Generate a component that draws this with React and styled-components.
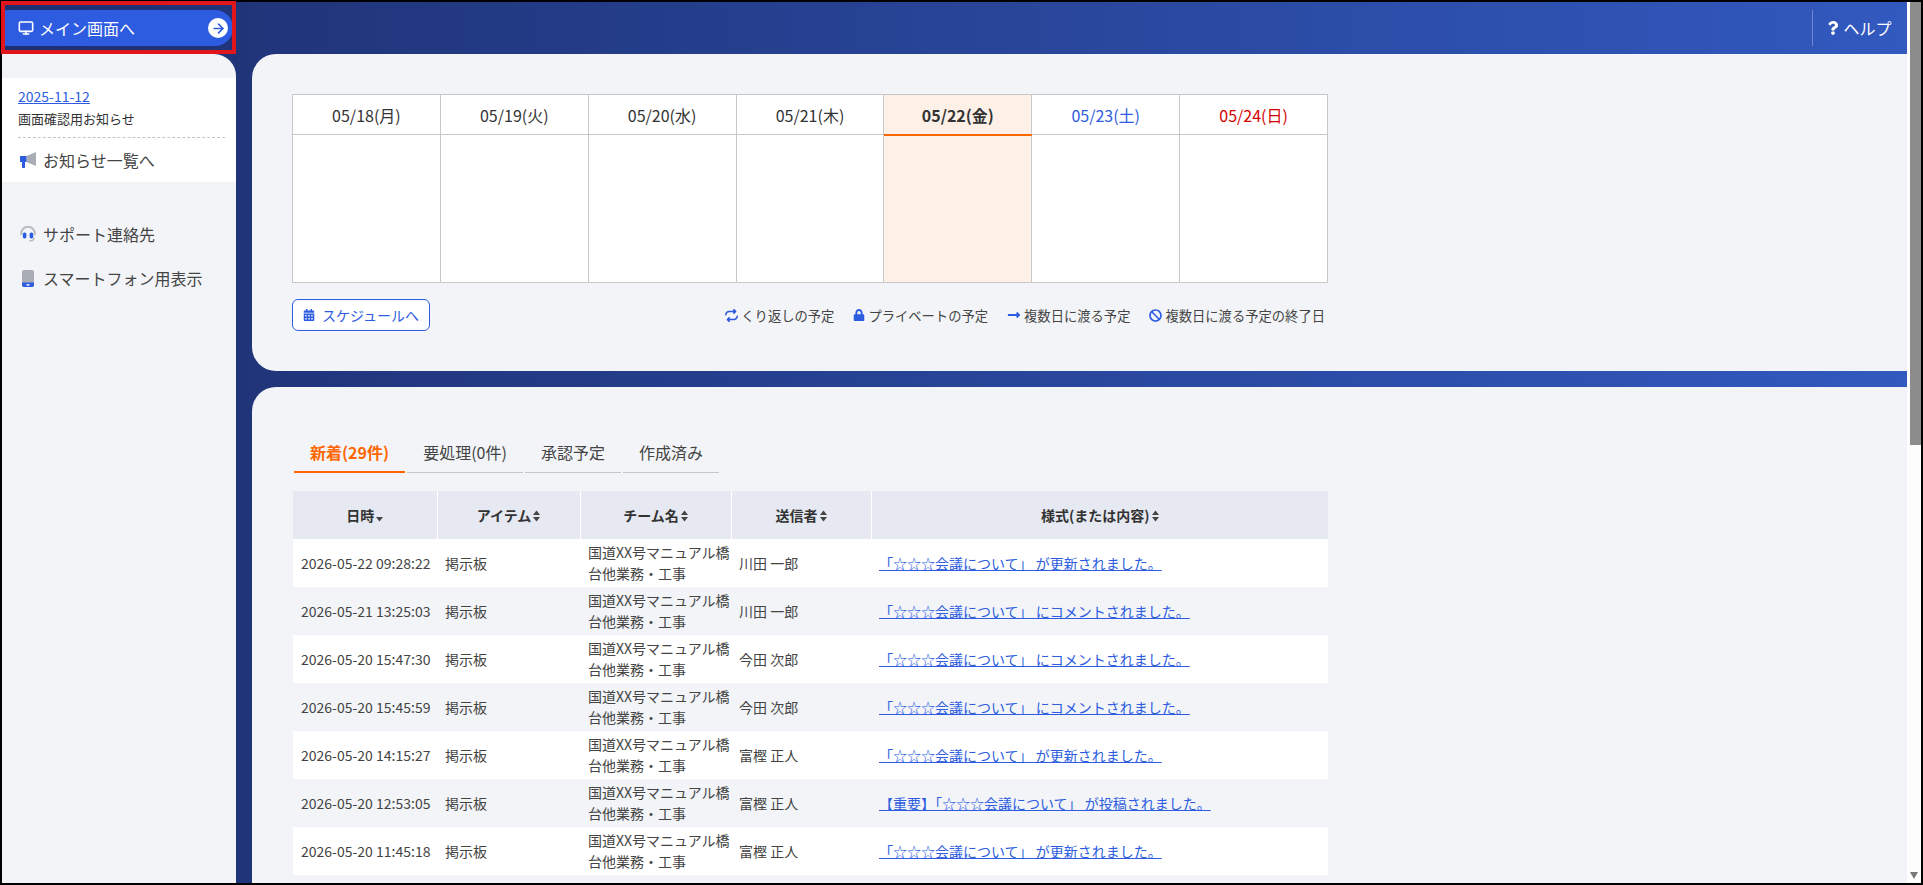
import styled, { createGlobalStyle } from "styled-components";
import { FaCalendarAlt, FaLock, FaLongArrowAltRight, FaBan, FaQuestion } from "react-icons/fa";
import { FaRepeat } from "react-icons/fa6";
import { LuMonitor, LuArrowRight } from "react-icons/lu";

const GlobalStyle = createGlobalStyle`
  html, body {
    margin: 0;
    height: 100%;
    overflow: hidden;
  }
  body {
    font-family: "Noto Sans CJK JP", "Noto Sans", sans-serif;
    color: #333;
    background: #000;
  }
  #root { height: 100%; }
`;

const Frame = styled.div`
  position: relative;
  height: 885px;
  box-sizing: border-box;
  border: 2px solid #000;
  background: #fff;
  display: flex;
`;

const Highlight = styled.div`
  position: absolute;
  left: -1px;
  top: -1px;
  width: 227px;
  height: 45px;
  border: 4px solid #e0161c;
  pointer-events: none;
`;

const Page = styled.div`
  flex: 1;
  min-width: 0;
  overflow: hidden;
  background: linear-gradient(90deg, #1d2f6f 0%, #3259bf 100%);
`;

const ScrollTrack = styled.div`
  width: 14px;
  flex: none;
  background: #fdfdfd;
  display: flex;
  flex-direction: column;
  justify-content: space-between;
`;

const ScrollThumb = styled.div`
  height: 443px;
  margin-left: 3px;
  background: #8c8c8c;
`;

const ScrollArrow = styled.div`
  width: 0;
  height: 0;
  margin: 0 0 4px 3px;
  border-style: solid;
  border-width: 7px 4.5px 0;
  border-color: #7a7a7a transparent transparent;
`;

const Header = styled.header`
  height: 52px;
  display: flex;
  align-items: center;
  justify-content: space-between;
`;

const MainButton = styled.a`
  width: 228px;
  height: 36px;
  margin-left: 3px;
  display: flex;
  align-items: center;
  box-sizing: border-box;
  padding: 0 5px 0 13px;
  gap: 5px;
  background: #2d5ce0;
  border-radius: 0 18px 18px 0;
  color: #fff;
  font-size: 16px;
`;

const ArrowCircle = styled.span`
  margin-left: auto;
  width: 20px;
  height: 20px;
  border-radius: 50%;
  background: #fff;
  color: #2d5ce0;
  display: flex;
  align-items: center;
  justify-content: center;
`;

const HelpLink = styled.a`
  height: 36px;
  width: 95px;
  box-sizing: border-box;
  border-left: 1px solid #6d86cf;
  padding-right: 2px;
  display: flex;
  align-items: center;
  justify-content: center;
  color: #fff;
  font-size: 16px;
  gap: 3px;
`;

const Body = styled.div`
  display: flex;
  align-items: stretch;
`;

const Sidebar = styled.aside`
  width: 234px;
  flex: none;
  box-sizing: border-box;
  background: #f2f4f8;
  border-radius: 0 22px 0 0;
  padding-top: 24px;
`;

const NewsBox = styled.div`
  height: 104px;
  box-sizing: border-box;
  background: #fff;
  padding: 7px 11px 0 16px;
`;

const DateLink = styled.a`
  display: block;
  font-size: 14px;
  line-height: 22px;
  color: #2d5ce0;
  text-decoration: underline;
`;

const NewsTitle = styled.div`
  font-size: 13px;
  line-height: 24px;
  height: 30px;
  border-bottom: 1px dashed #c4c4c4;
  color: #333;
`;

const SideLink = styled.a`
  display: flex;
  align-items: center;
  gap: 5px;
  height: 44px;
  font-size: 16px;
  color: #444;
`;

const SideNav = styled.nav`
  padding: 30px 16px 0;
`;

const IconBox = styled.span`
  width: 20px;
  display: flex;
  justify-content: center;
  flex: none;
`;

const Content = styled.main`
  flex: 1;
  min-width: 0;
  margin-left: 16px;
  display: flex;
  flex-direction: column;
  gap: 16px;
`;

const Card = styled.section`
  background: #f2f4f8;
  border-radius: 24px 0 0 24px;
  box-sizing: border-box;
  padding: ${(p) => p.$pad};
`;

const CalGrid = styled.div`
  width: 1036px;
  display: grid;
  grid-template-columns: repeat(7, 1fr);
  border-style: solid;
  border-width: 1px 0 0 1px;
  border-color: #c8c8c8;
  box-sizing: border-box;
`;

const CalHead = styled.div`
  position: relative;
  height: 40px;
  box-sizing: border-box;
  display: flex;
  align-items: center;
  justify-content: center;
  padding-top: 1px;
  font-size: 16px;
  font-weight: ${(p) => (p.$today ? 700 : 400)};
  color: ${(p) => p.$color || "#333"};
  background: ${(p) => (p.$today ? "#fdf0e6" : "#fff")};
  border-right: 1px solid #c8c8c8;
  border-bottom: 1px solid ${(p) => (p.$today ? "#ff6600" : "#c8c8c8")};
  box-shadow: ${(p) => (p.$today ? "0 1px 0 #ff6600" : "none")};
`;

const CalCell = styled.div`
  height: 148px;
  box-sizing: border-box;
  background: ${(p) => (p.$today ? "#fdf0e6" : "#fff")};
  border-right: 1px solid #c8c8c8;
  border-bottom: 1px solid #c8c8c8;
`;

const CalFooter = styled.div`
  width: 1036px;
  margin-top: 16px;
  display: flex;
  align-items: center;
  justify-content: space-between;
`;

const ScheduleButton = styled.a`
  width: 138px;
  height: 32px;
  box-sizing: border-box;
  display: flex;
  align-items: center;
  justify-content: center;
  gap: 7px;
  background: #fff;
  border: 1px solid #2d5ce0;
  border-radius: 6px;
  color: #2d5ce0;
  font-size: 14px;
`;

const Legend = styled.div`
  display: flex;
  gap: 19px;
  padding-right: 3px;
`;

const LegendItem = styled.span`
  display: flex;
  align-items: center;
  gap: 3px;
  font-size: 13.3px;
  color: #444;
  svg { color: #2d5ce0; }
`;

const Tabs = styled.div`
  display: flex;
  gap: 2px;
  margin-left: 2px;
  margin-bottom: 18px;
`;

const Tab = styled.div`
  width: ${(p) => p.$w}px;
  height: 34px;
  box-sizing: border-box;
  display: flex;
  align-items: center;
  justify-content: center;
  padding-bottom: 7px;
  font-size: 16px;
  font-weight: ${(p) => (p.$active ? 700 : 400)};
  color: ${(p) => (p.$active ? "#ff6600" : "#444")};
  border-bottom: ${(p) => (p.$active ? "2px solid #ff6600" : "1px solid #c8c8c8")};
`;

const Table = styled.table`
  width: 1035px;
  margin-left: 1px;
  table-layout: fixed;
  border-collapse: collapse;
  font-size: 14px;
`;

const Th = styled.th`
  height: 48px;
  padding: 0;
  background: #e6e9f2;
  border-left: 1px solid #fff;
  &:first-child { border-left: 0; }
  font-weight: 700;
  color: #333;
  font-size: 14px;
`;

const Tr = styled.tr`
  background: ${(p) => (p.$alt ? "#f2f4f8" : "#fff")};
`;

const Td = styled.td`
  height: 48px;
  padding: 0 0 0 8px;
  box-sizing: border-box;
  line-height: 21px;
  color: #444;
  white-space: ${(p) => (p.$wrap ? "normal" : "nowrap")};
`;

const MsgLink = styled.a`
  color: #2d5ce0;
  text-decoration: underline;
`;

const Sort = styled.svg`
  width: 7px;
  height: 12px;
  margin-left: 2px;
  vertical-align: -1px;
  fill: #444;
`;

const SortIcon = ({ desc }) => (
  <Sort viewBox="0 0 7 12">
    {!desc && <path d="M3.5 0.5 7 5H0z" />}
    <path d="M0 7h7L3.5 11.5z" />
  </Sort>
);

const SupportIcon = () => (
  <svg width="16" height="16" viewBox="0 0 16 16">
    <path d="M1.2 9V7.5a6.8 6.8 0 0 1 13.6 0V9" fill="none" stroke="#b9bcc4" strokeWidth="2" />
    <rect x="2.8" y="6.4" width="3.6" height="6" rx="1.6" fill="#2d5ce0" />
    <rect x="9.6" y="6.4" width="3.6" height="6" rx="1.6" fill="#2d5ce0" />
    <path d="M14 11.5c0 2.4-2 3.4-4.5 3.4" fill="none" stroke="#b9bcc4" strokeWidth="1.6" />
  </svg>
);

const PhoneIcon = () => (
  <svg width="12" height="17" viewBox="0 0 12 17">
    <rect x="0" y="0" width="12" height="17" rx="2" fill="#a9adb6" />
    <path d="M0 12.5h12V15a2 2 0 0 1-2 2H2a2 2 0 0 1-2-2z" fill="#2d5ce0" />
    <rect x="4.5" y="14.2" width="3" height="1.4" fill="#fff" />
  </svg>
);

const MegaphoneIcon = () => (
  <svg width="16" height="16" viewBox="0 0 16 16">
    <path d="M6.5 4 16 0v14L6.5 10z" fill="#a9adb6" />
    <path d="M0 4h6.5v6H5v6H2v-6H0z" fill="#2d5ce0" />
  </svg>
);

const days = [
  { label: "05/18(月)" },
  { label: "05/19(火)" },
  { label: "05/20(水)" },
  { label: "05/21(木)" },
  { label: "05/22(金)", today: true },
  { label: "05/23(土)", color: "#2d5ce0" },
  { label: "05/24(日)", color: "#d40000" },
];

const updated = "「☆☆☆会議について」 が更新されました。";
const commented = "「☆☆☆会議について」 にコメントされました。";
const posted = "【重要】「☆☆☆会議について」 が投稿されました。";

const rows = [
  ["2026-05-22 09:28:22", "川田 一郎", updated],
  ["2026-05-21 13:25:03", "川田 一郎", commented],
  ["2026-05-20 15:47:30", "今田 次郎", commented],
  ["2026-05-20 15:45:59", "今田 次郎", commented],
  ["2026-05-20 14:15:27", "富樫 正人", updated],
  ["2026-05-20 12:53:05", "富樫 正人", posted],
  ["2026-05-20 11:45:18", "富樫 正人", updated],
];

const App = () => {
  return (
    <>
      <GlobalStyle />
      <Frame>
        <Page>
          <Header>
            <MainButton>
              <LuMonitor size={16} strokeWidth={2.4} />
              メイン画面へ
              <ArrowCircle><LuArrowRight size={15} strokeWidth={2.6} /></ArrowCircle>
            </MainButton>
            <HelpLink><FaQuestion size={14} />ヘルプ</HelpLink>
          </Header>
          <Body>
            <Sidebar>
              <NewsBox>
                <DateLink>2025-11-12</DateLink>
                <NewsTitle>画面確認用お知らせ</NewsTitle>
                <SideLink><IconBox><MegaphoneIcon /></IconBox>お知らせ一覧へ</SideLink>
              </NewsBox>
              <SideNav>
                <SideLink><IconBox><SupportIcon /></IconBox>サポート連絡先</SideLink>
                <SideLink><IconBox><PhoneIcon /></IconBox>スマートフォン用表示</SideLink>
              </SideNav>
            </Sidebar>
            <Content>
              <Card $pad="40px 0 40px 40px">
                <CalGrid>
                  {days.map((d) => (
                    <CalHead key={d.label} $today={d.today} $color={d.color}>{d.label}</CalHead>
                  ))}
                  {days.map((d) => (
                    <CalCell key={d.label} $today={d.today} />
                  ))}
                </CalGrid>
                <CalFooter>
                  <ScheduleButton><FaCalendarAlt size={12} />スケジュールへ</ScheduleButton>
                  <Legend>
                    <LegendItem><FaRepeat size={13} />くり返しの予定</LegendItem>
                    <LegendItem><FaLock size={12} />プライベートの予定</LegendItem>
                    <LegendItem><FaLongArrowAltRight size={14} />複数日に渡る予定</LegendItem>
                    <LegendItem><FaBan size={13} />複数日に渡る予定の終了日</LegendItem>
                  </Legend>
                </CalFooter>
              </Card>
              <Card $pad="52px 0 40px 40px">
                <Tabs>
                  <Tab $w={111} $active>新着(29件)</Tab>
                  <Tab $w={116}>要処理(0件)</Tab>
                  <Tab $w={96}>承認予定</Tab>
                  <Tab $w={96}>作成済み</Tab>
                </Tabs>
                <Table>
                  <colgroup>
                    <col width="144" />
                    <col width="143" />
                    <col width="151" />
                    <col width="140" />
                    <col />
                  </colgroup>
                  <thead>
                    <tr>
                      <Th>日時<SortIcon desc /></Th>
                      <Th>アイテム<SortIcon /></Th>
                      <Th>チーム名<SortIcon /></Th>
                      <Th>送信者<SortIcon /></Th>
                      <Th>様式(または内容)<SortIcon /></Th>
                    </tr>
                  </thead>
                  <tbody>
                    {rows.map((r, i) => (
                      <Tr key={r[0]} $alt={i % 2 === 1}>
                        <Td>{r[0]}</Td>
                        <Td>掲示板</Td>
                        <Td $wrap>国道XX号マニュアル橋台他業務・工事</Td>
                        <Td>{r[1]}</Td>
                        <Td><MsgLink>{r[2]}</MsgLink></Td>
                      </Tr>
                    ))}
                    <Tr $alt><Td colSpan={5} /></Tr>
                  </tbody>
                </Table>
              </Card>
            </Content>
          </Body>
        </Page>
        <ScrollTrack>
          <ScrollThumb />
          <ScrollArrow />
        </ScrollTrack>
        <Highlight />
      </Frame>
    </>
  );
};

export default App;
